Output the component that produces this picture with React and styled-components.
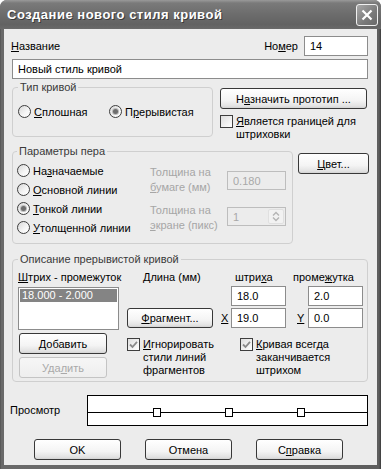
import React from "react";
import styled, { createGlobalStyle } from "styled-components";

const GlobalStyle = createGlobalStyle`
  html, body {
    margin: 0;
    padding: 0;
    background: #ffffff;
  }
  body {
    font-family: "Liberation Sans", Arial, sans-serif;
    font-size: 11px;
    color: #000;
  }
`;

const Window = styled.div`
  box-sizing: border-box;
  width: 381px;
  height: 469px;
  display: flex;
  flex-direction: column;
  background: linear-gradient(90deg, #4a4a4a, #6a6a6a 1px, #5e5e5e 379px, #3a3a3a);
  border-radius: 7px 7px 0 0;
  overflow: hidden;
`;

const TitleBar = styled.div`
  height: 29px;
  flex: none;
  display: flex;
  align-items: center;
  justify-content: space-between;
  padding: 0 3px 0 7px;
  background: linear-gradient(#9a9a9a, #7a7a7a 3px, #6c6c6c 50%, #626262 85%, #6a6a6a);
  color: #fff;
  font-size: 13px;
  font-weight: bold;
  letter-spacing: 0.5px;
  text-shadow: 1px 1px 0 #3a3a3a;
`;

const CloseButton = styled.span`
  box-sizing: border-box;
  width: 22px;
  height: 22px;
  display: flex;
  align-items: center;
  justify-content: center;
  border: 1px solid #f0f0f0;
  border-radius: 3px;
  background: linear-gradient(135deg, #a8a8a8, #7a7a7a 60%, #6a6a6a);
`;

const Body = styled.div`
  flex: 1;
  margin: 0 4px 4px;
  background: #ececec;
  padding: 7px 9px 0 8px;
  display: flex;
  flex-direction: column;
`;

const Row = styled.div`
  display: flex;
  align-items: ${(p) => p.$align || "center"};
  margin-top: ${(p) => p.$mt || 0}px;
  gap: ${(p) => p.$gap || 0}px;
  height: ${(p) => (p.$h ? `${p.$h}px` : "auto")};
`;

const Label = styled.span`
  white-space: nowrap;
  color: ${(p) => (p.$disabled ? "#a6a6a6" : "#000")};
  margin-left: ${(p) => p.$ml || 0}px;
  margin-right: ${(p) => p.$mr || 0}px;
  line-height: ${(p) => p.$lh || 13}px;
`;

const Spacer = styled.div`
  flex: 1;
`;

const TextInput = styled.input`
  box-sizing: border-box;
  width: ${(p) => (p.$w ? `${p.$w}px` : "100%")};
  height: ${(p) => p.$h || 20}px;
  margin: 0;
  padding: 0 5px;
  font: inherit;
  color: #000;
  background: #fff;
  border: 1px solid #8c8c8c;
  outline: none;
  &:disabled {
    background: #ececec;
    border-color: #bdbdbd;
    color: #a8a8a8;
  }
`;

const Group = styled.fieldset`
  box-sizing: border-box;
  margin: 0;
  min-width: 0;
  flex: none;
  width: ${(p) => p.$w}px;
  height: ${(p) => p.$h}px;
  padding: ${(p) => p.$pad};
  border: 1px solid #cfcfcf;
  border-radius: 4px;
`;

const Legend = styled.legend`
  padding: 0 2px;
  line-height: 13px;
  color: #3a3a3a;
`;

const Button = styled.button`
  box-sizing: border-box;
  flex: none;
  width: ${(p) => p.$w}px;
  height: ${(p) => p.$h || 21}px;
  margin: ${(p) => p.$m || 0};
  padding: 0;
  font: inherit;
  color: #000;
  border: 1px solid #383838;
  border-radius: 3px;
  background: linear-gradient(#ffffff, #f4f4f4 60%, #e2e2e2 90%, #d2d2d2);
  &:disabled {
    color: #a9a9a9;
    border-color: #c4c4c4;
    background: linear-gradient(#f6f6f6, #eeeeee);
  }
`;

const RadioLabel = styled.label`
  display: flex;
  align-items: center;
  gap: 3px;
  white-space: nowrap;
`;

const RadioCircle = styled.span`
  box-sizing: border-box;
  flex: none;
  width: 13px;
  height: 13px;
  border-radius: 50%;
  border: 1px solid #3e3e3e;
  background: linear-gradient(135deg, #d8d8d8, #f6f6f6 60%, #ffffff);
  display: flex;
  align-items: center;
  justify-content: center;
  &::after {
    content: "";
    width: 5px;
    height: 5px;
    border-radius: 50%;
    background: ${(p) => (p.$on ? "#6e6e6e" : "transparent")};
    box-shadow: ${(p) => (p.$on ? "0 0 0 1px #bcbcbc" : "none")};
  }
`;

const CheckLabel = styled.label`
  display: flex;
  align-items: flex-start;
  gap: 3px;
  margin-left: ${(p) => p.$ml || 0}px;
  margin-top: ${(p) => p.$mt || 0}px;
  line-height: 13px;
`;

const CheckBox = styled.span`
  box-sizing: border-box;
  flex: none;
  width: 13px;
  height: 13px;
  border: 1px solid #3e3e3e;
  background: linear-gradient(135deg, #dedede, #ffffff);
  display: flex;
  align-items: center;
  justify-content: center;
`;

const TypeGrid = styled.div`
  display: grid;
  grid-template-columns: 91px auto;
`;

const PenGrid = styled.div`
  display: grid;
  grid-template-columns: 133px 77px 59px;
  grid-template-rows: repeat(4, 19px);
  align-items: center;
`;

const Cell = styled.div`
  grid-column: ${(p) => p.$col};
  grid-row: ${(p) => p.$row};
  align-self: ${(p) => p.$self || "center"};
  padding-left: ${(p) => p.$pl || 0}px;
  margin-top: ${(p) => p.$mt || 0}px;
  white-space: nowrap;
`;

const RightColumn = styled.div`
  display: flex;
  flex-direction: column;
  padding-top: ${(p) => p.$pt || 0}px;
`;

const SpinBox = styled.div`
  box-sizing: border-box;
  width: 59px;
  height: 19px;
  display: flex;
  align-items: center;
  padding: 0 1px 0 5px;
  border: 1px solid #bdbdbd;
  color: #a8a8a8;
  background: #ececec;
`;

const SpinText = styled.span`
  flex: 1;
`;

const SpinArrows = styled.span`
  box-sizing: border-box;
  width: 16px;
  height: 15px;
  display: flex;
  align-items: center;
  justify-content: center;
  border: 1px solid #e0e0e0;
  border-radius: 2px;
  background: #f2f2f2;
`;

const DashLayout = styled.div`
  display: flex;
  gap: 8px;
`;

const LeftColumn = styled.div`
  width: 101px;
  display: flex;
  flex-direction: column;
`;

const ListBox = styled.div`
  box-sizing: border-box;
  height: 43px;
  margin-top: 3px;
  padding: 1px;
  border: 1px solid #8c8c8c;
  background: #fff;
`;

const ListItem = styled.div`
  height: 13px;
  line-height: 13px;
  padding-left: 2px;
  color: ${(p) => (p.$selected ? "#fff" : "#000")};
  background: ${(p) => (p.$selected ? "#848484" : "transparent")};
`;

const DashGrid = styled.div`
  display: grid;
  grid-template-columns: 86px 18px 55px 22px 55px;
  grid-template-rows: 14px 20px 20px auto;
  row-gap: 2px;
  align-items: center;
`;

const PreviewBox = styled.div`
  box-sizing: border-box;
  width: 281px;
  height: 31px;
  margin-left: auto;
  border: 1px solid #000;
  background: #fff;
  display: flex;
`;

const DialogButtons = styled.div`
  display: flex;
  gap: 24px;
  margin-top: 13px;
  padding-left: 22px;
`;

const Check = () => (
  <svg width="9" height="9" viewBox="0 0 9 9">
    <path d="M1 4.5 L3.5 7 L8 1.8" fill="none" stroke="#8a8a8a" strokeWidth="1.8" />
  </svg>
);

const Radio = ({ on, children }) => (
  <RadioLabel>
    <RadioCircle $on={on} />
    <span>{children}</span>
  </RadioLabel>
);

const App = () => {
  return (
    <>
      <GlobalStyle />
      <Window>
        <TitleBar>
          <span>Создание нового стиля кривой</span>
          <CloseButton>
            <svg width="12" height="12" viewBox="0 0 12 12">
              <path d="M1.5 1.5 L10.5 10.5 M10.5 1.5 L1.5 10.5" stroke="#fff" strokeWidth="2.2" />
            </svg>
          </CloseButton>
        </TitleBar>
        <Body>
          <Row $h={20}>
            <Label $ml={-1}>
              <u>Н</u>азвание
            </Label>
            <Spacer />
            <Label $mr={6}>
              Но<u>м</u>ер
            </Label>
            <TextInput $w={64} readOnly defaultValue="14" />
          </Row>
          <Row $mt={3}>
            <TextInput readOnly defaultValue="Новый стиль кривой" />
          </Row>

          <Row $mt={2} $gap={7} $align="flex-start">
            <Group $w={201} $h={56} $pad="11px 0 0 5px">
              <Legend>Тип кривой</Legend>
              <TypeGrid>
                <Radio>
                  <u>С</u>плошная
                </Radio>
                <Radio on>
                  П<u>р</u>ерывистая
                </Radio>
              </TypeGrid>
            </Group>
            <RightColumn $pt={7}>
              <Button $w={147}>
                Н<u>а</u>значить прототип ...
              </Button>
              <CheckLabel $mt={6}>
                <CheckBox />
                <span>
                  <u>Я</u>вляется границей для
                  <br />
                  штриховки
                </span>
              </CheckLabel>
            </RightColumn>
          </Row>

          <Row $mt={4} $gap={5} $align="flex-start">
            <Group $w={281} $h={99} $pad="3px 0 0 4px">
              <Legend>Параметры пера</Legend>
              <PenGrid>
                <Cell $col="1" $row="1">
                  <Radio>
                    На<u>з</u>начаемые
                  </Radio>
                </Cell>
                <Cell $col="1" $row="2">
                  <Radio>
                    <u>О</u>сновной линии
                  </Radio>
                </Cell>
                <Cell $col="1" $row="3">
                  <Radio on>
                    <u>Т</u>онкой линии
                  </Radio>
                </Cell>
                <Cell $col="1" $row="4">
                  <Radio>
                    <u>У</u>толщенной линии
                  </Radio>
                </Cell>
                <Cell $col="2" $row="1 / 3">
                  <Label $disabled $lh={15}>
                    Толщина на
                    <br />
                    <u>б</u>умаге (мм)
                  </Label>
                </Cell>
                <Cell $col="3" $row="1 / 3" $mt={1}>
                  <TextInput $w={59} $h={19} disabled defaultValue="0.180" />
                </Cell>
                <Cell $col="2" $row="3 / 5">
                  <Label $disabled $lh={15}>
                    Толщина на
                    <br />
                    <u>э</u>кране (пикс)
                  </Label>
                </Cell>
                <Cell $col="3" $row="3 / 5" $mt={-3}>
                  <SpinBox>
                    <SpinText>1</SpinText>
                    <SpinArrows>
                      <svg width="8" height="11" viewBox="0 0 8 11">
                        <path d="M1 4.5 L4 1.5 L7 4.5 M1 6.5 L4 9.5 L7 6.5" fill="none" stroke="#b4b4b4" strokeWidth="1.4" />
                      </svg>
                    </SpinArrows>
                  </SpinBox>
                </Cell>
              </PenGrid>
            </Group>
            <RightColumn $pt={8}>
              <Button $w={71}>
                <u>Ц</u>вет...
              </Button>
            </RightColumn>
          </Row>

          <Row $mt={9}>
            <Group $w={356} $h={129} $pad="4px 0 0 5px">
              <Legend>Описание прерывистой кривой</Legend>
              <DashLayout>
                <LeftColumn>
                  <Label $lh={14}>
                    <u>Ш</u>трих - промежуток
                  </Label>
                  <ListBox>
                    <ListItem $selected>18.000 - 2.000</ListItem>
                  </ListBox>
                  <Button $w={88} $m="3px 0 0 1px">
                    <u>Д</u>обавить
                  </Button>
                  <Button $w={88} $m="3px 0 0 1px" disabled>
                    Уда<u>л</u>ить
                  </Button>
                </LeftColumn>
                <DashGrid>
                  <Cell $col="1 / 3" $row="1" $pl={16}>
                    Длина (мм)
                  </Cell>
                  <Cell $col="3" $row="1" $pl={4}>
                    штри<u>х</u>а
                  </Cell>
                  <Cell $col="4 / 6" $row="1" $pl={7}>
                    проме<u>ж</u>утка
                  </Cell>
                  <Cell $col="3" $row="2">
                    <TextInput $w={55} readOnly defaultValue="18.0" />
                  </Cell>
                  <Cell $col="5" $row="2">
                    <TextInput $w={55} readOnly defaultValue="2.0" />
                  </Cell>
                  <Cell $col="1" $row="3">
                    <Button $w={86} $h={20}>
                      <u>Ф</u>рагмент...
                    </Button>
                  </Cell>
                  <Cell $col="2" $row="3" $pl={8}>
                    <u>X</u>
                  </Cell>
                  <Cell $col="3" $row="3">
                    <TextInput $w={55} readOnly defaultValue="19.0" />
                  </Cell>
                  <Cell $col="4" $row="3" $pl={11}>
                    <u>Y</u>
                  </Cell>
                  <Cell $col="5" $row="3">
                    <TextInput $w={55} readOnly defaultValue="0.0" />
                  </Cell>
                  <Cell $col="1 / 3" $row="4" $self="start">
                    <CheckLabel $mt={8}>
                      <CheckBox>
                        <Check />
                      </CheckBox>
                      <span>
                        <u>И</u>гнорировать
                        <br />
                        стили линий
                        <br />
                        фрагментов
                      </span>
                    </CheckLabel>
                  </Cell>
                  <Cell $col="3 / 6" $row="4" $self="start">
                    <CheckLabel $mt={8} $ml={9}>
                      <CheckBox>
                        <Check />
                      </CheckBox>
                      <span>
                        <u>К</u>ривая всегда
                        <br />
                        заканчивается
                        <br />
                        штрихом
                      </span>
                    </CheckLabel>
                  </Cell>
                </DashGrid>
              </DashLayout>
            </Group>
          </Row>

          <Row $mt={13}>
            <Label $ml={-2}>Просмотр</Label>
            <PreviewBox>
              <svg width="279" height="29" viewBox="0 0 279 29">
                <line x1="0" y1="16.5" x2="279" y2="16.5" stroke="#000" strokeWidth="1" />
                <rect x="65.5" y="12.5" width="7" height="8" fill="#fff" stroke="#000" />
                <rect x="137.5" y="12.5" width="7" height="8" fill="#fff" stroke="#000" />
                <rect x="209.5" y="12.5" width="7" height="8" fill="#fff" stroke="#000" />
              </svg>
            </PreviewBox>
          </Row>

          <DialogButtons>
            <Button $w={87}>OK</Button>
            <Button $w={87}>Отмена</Button>
            <Button $w={87}>
              С<u>п</u>равка
            </Button>
          </DialogButtons>
        </Body>
      </Window>
    </>
  );
};

export default App;
